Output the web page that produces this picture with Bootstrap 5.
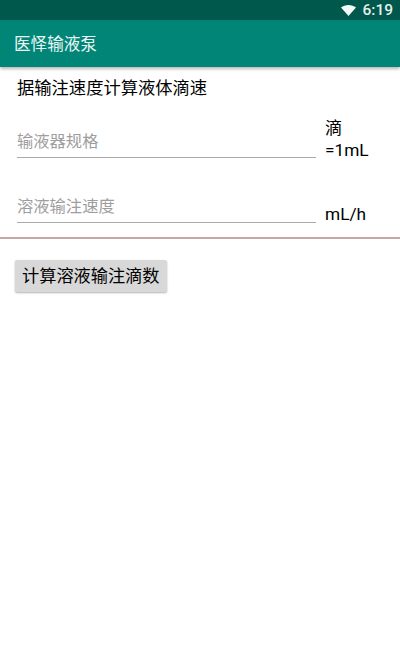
<!DOCTYPE html>
<html lang="zh">
<head>
<meta charset="utf-8">
<title>医怿输液泵</title>
<link href="https://cdn.jsdelivr.net/npm/bootstrap@5.3.0/dist/css/bootstrap.min.css" rel="stylesheet">
<style>
html,body{height:100%;margin:0;background:#fff;}
body{font-family:Roboto,"Noto Sans CJK SC",sans-serif;color:#000;overflow:hidden;}
.status-strip{height:20px;background:#00574b;color:#e4f1ee;font-size:15.5px;line-height:20px;padding-right:7px;font-weight:500;}
.wifi-glyph{width:15px;height:11px;margin-right:6px;}
.app-bar{height:47px;background:#008577;color:#eaf6f4;font-size:16.6px;padding-left:14px;padding-top:3px;box-shadow:0 2px 3px rgba(0,0,0,.28);position:relative;}
.intro-line{font-size:17.3px;line-height:24px;padding:9px 0 0 17px;height:33px;margin-bottom:0;}
.field-row{padding-left:17px;padding-right:8px;}
.field-one{height:58px;}
.field-two{height:57px;margin-top:8px;}
.under-input{width:299px;flex:none;border:0;border-bottom:1px solid #aaa;border-radius:0;background:transparent;font-size:16.3px;line-height:24px;padding:0 0 4px;height:29px;outline:none;color:#000;}
.under-input::placeholder{color:#9e9e9e;opacity:1;}
.unit-label{margin-left:9px;margin-bottom:-3px;font-size:17.3px;line-height:22px;width:60px;flex:none;}
.field-two .unit-label{margin-bottom:-2px;}
.rule-line{height:2px;background:#c4a9a5;margin-top:14px;}
.calc-btn{background:#d8d8d8;border:0;border-radius:2px;font-size:17.2px;color:#000;padding:0 7px;height:32px;line-height:32px;margin:21px 0 0 15px;box-shadow:0 1px 2px rgba(0,0,0,.3);}
.calc-btn:hover,.calc-btn:active{background:#d8d8d8;color:#000;}
</style>
</head>
<body>
<div class="status-strip d-flex justify-content-end align-items-center">
  <svg class="wifi-glyph" viewBox="0 0 15 11" aria-hidden="true"><path d="M0 2.600C2 .9 4.600 0 7.500 0s5.500.9 7.500 2.600L7.500 11z" fill="#f4faf8"/></svg>
  <span>6:19</span>
</div>
<div class="app-bar d-flex align-items-center">医怿输液泵</div>
<p class="intro-line">据输注速度计算液体滴速</p>
<div class="field-row field-one d-flex align-items-end">
  <input class="under-input" type="text" placeholder="输液器规格">
  <div class="unit-label">滴<br>=1mL</div>
</div>
<div class="field-row field-two d-flex align-items-end">
  <input class="under-input" type="text" placeholder="溶液输注速度">
  <div class="unit-label">mL/h</div>
</div>
<div class="rule-line"></div>
<button type="button" class="btn calc-btn d-block">计算溶液输注滴数</button>
<script src="https://cdn.jsdelivr.net/npm/bootstrap@5.3.0/dist/js/bootstrap.bundle.min.js"></script>
</body>
</html>
